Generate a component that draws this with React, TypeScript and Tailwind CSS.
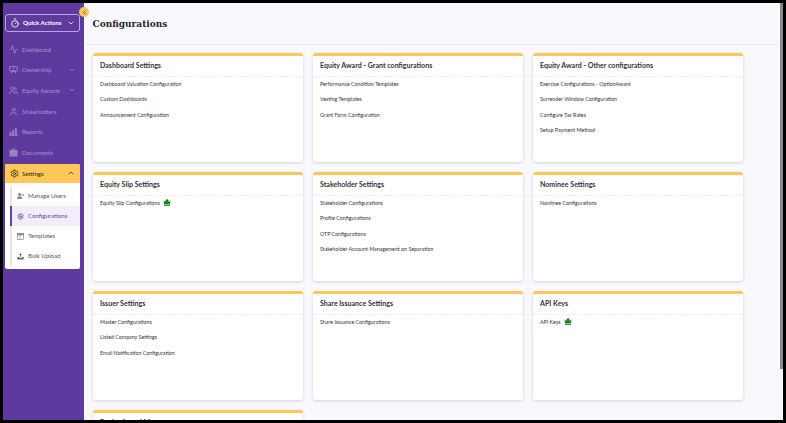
import { Activity, ChevronDown, ChevronLeft, ChevronUp, Settings, Timer, Users, User } from "lucide-react";

function Crown() {
  return (
    <svg width="8" height="7" viewBox="0 0 9 8" className="ml-[3px] mb-[2px]">
      <path d="M0.5 1.5 L2.4 3.4 L3 1 L4.5 0 L6 1 L6.6 3.4 L8.5 1.5 L8 5.6 L1 5.6 Z" fill="#16861f" />
      <rect x="1" y="6.3" width="7" height="1.5" fill="#16861f" />
    </svg>
  );
}

function OwnershipIcon() {
  return (
    <svg width="9" height="8" viewBox="0 0 10 9" fill="none" stroke="currentColor" strokeWidth="1">
      <rect x="0.7" y="0.7" width="8.6" height="5" rx="1" />
      <path d="M3 8.3V5.5h4v2.8M5 2v1.6" />
    </svg>
  );
}

function ReportsIcon() {
  return (
    <svg width="9" height="9" viewBox="0 0 9 9" fill="currentColor" opacity="0.85">
      <rect x="0.5" y="5" width="1.8" height="3" />
      <rect x="3.2" y="3" width="1.8" height="5" />
      <rect x="6" y="1" width="1.8" height="7" />
      <rect x="0" y="8" width="9" height="0.8" />
    </svg>
  );
}

function DocsIcon() {
  return (
    <svg width="9" height="9" viewBox="0 0 9 9" fill="currentColor" opacity="0.85">
      <path d="M3 0.5h3V2h2.5v6.5h-8V2H3z M3.8 1.2V2h1.4v-.8z" fillRule="evenodd" />
    </svg>
  );
}

function UsersSmall() {
  return (
    <svg width="7" height="6" viewBox="0 0 7 6" fill="#77777f">
      <circle cx="2.6" cy="1.4" r="1.3" />
      <path d="M0 5.8c0-1.6 1-2.5 2.6-2.5s2.6.9 2.6 2.5z" />
      <rect x="4.6" y="1" width="2.2" height=".7" />
      <rect x="5.2" y="2.3" width="1.6" height=".7" />
    </svg>
  );
}

function TableIcon() {
  return (
    <svg width="7" height="7" viewBox="0 0 7 7" fill="none" stroke="#8c8c92" strokeWidth=".7">
      <rect x=".4" y=".4" width="6.2" height="6.2" />
      <rect x=".4" y=".4" width="6.2" height="1.6" fill="#8c8c92" />
      <path d="M3 2v4.6" />
    </svg>
  );
}

function UploadIcon() {
  return (
    <svg width="7" height="7" viewBox="0 0 7 7" fill="#66666e">
      <path d="M3.5 0 5 1.8H4v2H3v-2H2z" />
      <path d="M0.3 4h1.6v.8h3.2V4h1.6v2.6H0.3z" />
    </svg>
  );
}

const cards: { t: string; items: string[]; crown?: boolean }[] = [
  { t: "Dashboard Settings", items: ["Dashboard Valuation Configuration", "Custom Dashboards", "Announcement Configuration"] },
  { t: "Equity Award - Grant configurations", items: ["Performance Condition Templates", "Vesting Templates", "Grant Form Configuration"] },
  { t: "Equity Award - Other configurations", items: ["Exercise Configurations - OptionAward", "Surrender Window Configuration", "Configure Tax Rates", "Setup Payment Method"] },
  { t: "Equity Slip Settings", items: ["Equity Slip Configurations"], crown: true },
  { t: "Stakeholder Settings", items: ["Stakeholder Configurations", "Profile Configurations", "OTP Configurations", "Stakeholder Account Management on Separation"] },
  { t: "Nominee Settings", items: ["Nominee Configurations"] },
  { t: "Issuer Settings", items: ["Master Configurations", "Listed Company Settings", "Email Notification Configuration"] },
  { t: "Share Issuance Settings", items: ["Share Issuance Configurations"] },
  { t: "API Keys", items: ["API Keys"], crown: true },
  { t: "Equity Award Management", items: [] },
];

function Card({ t, items, crown }: { t: string; items: string[]; crown?: boolean }) {
  return (
    <div className="h-[109px] bg-white rounded-[3px] border-t-[3px] border-[#fdc858] shadow-[0_1px_3px_rgba(40,40,70,0.18)]">
      <div className="h-[21px] pl-[7px] pt-[4px] text-[7.05px] leading-[12px] font-bold text-[#33333d] border-b border-dashed border-[#ececf0]">{t}</div>
      <div className="pl-[7px] flex flex-col">
        {items.map((i) => (
          <div key={i} className="h-[15.4px] flex items-center text-[5.3px] text-[#33333a]">
            {i}
            {crown && <Crown />}
          </div>
        ))}
      </div>
    </div>
  );
}

function NavItem({ icon, label, chev }: { icon: React.ReactNode; label: string; chev?: boolean }) {
  return (
    <div className="h-[20.6px] flex items-center pl-[6px] pr-[8px] text-[6.1px] text-[#a591cc]">
      <span className="w-[13px] flex items-center">{icon}</span>
      <span className="flex-1">{label}</span>
      {chev && <ChevronDown size={8} strokeWidth={2} />}
    </div>
  );
}

function SubItem({ icon, label, active }: { icon: React.ReactNode; label: string; active?: boolean }) {
  return (
    <div className={`h-[20px] flex items-center pl-[5px] text-[6.1px] border-l-2 ${active ? "border-[#6a3fa8] bg-[#f1eef9] text-[#6a3fa8]" : "border-[#e4e4e8] text-[#55555c]"}`}>
      <span className="w-[11px] flex items-center">{icon}</span>
      <span>{label}</span>
    </div>
  );
}

export default function App() {
  return (
    <div className="w-[786px] h-[423px] bg-black p-[3px] flex overflow-hidden font-['Lato',sans-serif]">
      <aside className="relative z-10 w-[81px] shrink-0 bg-[#5f3a9e] flex flex-col">
        <div className="mt-[11px] ml-[2px] mr-[4px] h-[18px] border border-[#b9a6dc] rounded-[3px] flex items-center pl-[4px] pr-[4px] text-white text-[6.2px] font-bold">
          <Timer size={10} strokeWidth={2} className="mr-[3px] shrink-0" />
          <span className="flex-1 whitespace-nowrap">Quick Actions</span>
          <ChevronDown size={8} strokeWidth={2.4} />
        </div>
        <div className="absolute right-[-5px] top-[4px] w-[10px] h-[10px] rounded-full bg-[#fdc858] flex items-center justify-center text-[#5f3a9e]">
          <ChevronLeft size={7} strokeWidth={3} />
        </div>
        <div className="mt-[7px] flex flex-col">
          <NavItem icon={<Activity size={9} />} label="Dashboard" />
          <NavItem icon={<OwnershipIcon />} label="Ownership" chev />
          <NavItem icon={<Users size={9} />} label="Equity Awards" chev />
          <NavItem icon={<User size={9} />} label="Stakeholders" />
          <NavItem icon={<ReportsIcon />} label="Reports" />
          <NavItem icon={<DocsIcon />} label="Documents" />
        </div>
        <div className="mt-[1px] ml-[2px] mr-[4px] rounded-[2px] overflow-hidden bg-white">
          <div className="h-[19.5px] bg-[#fdc858] flex items-center pl-[5px] pr-[5px] text-[6.2px] font-medium text-[#3a3320]">
            <Settings size={9} strokeWidth={2.4} className="mr-[3px] shrink-0" />
            <span className="flex-1">Settings</span>
            <ChevronUp size={8} strokeWidth={2.4} />
          </div>
          <div className="pl-[5px] pb-[3px] pt-[3px] flex flex-col">
            <SubItem icon={<UsersSmall />} label="Manage Users" />
            <SubItem icon={<Settings size={7} strokeWidth={2.6} />} label="Configurations" active />
            <SubItem icon={<TableIcon />} label="Templates" />
            <SubItem icon={<UploadIcon />} label="Bulk Upload" />
          </div>
        </div>
      </aside>
      <main className="relative flex-1 bg-[#f9f8fd] flex flex-col overflow-hidden">
        <div className="h-[42px] shrink-0 border-b border-[#ebebf0] pl-[8.5px] pt-[13px] text-[10px] leading-[16px] font-bold text-[#26262e] font-['DejaVu_Serif_Condensed','DejaVu_Serif',serif]">Configurations</div>
        <div className="pl-[9px] pt-[8px] grid grid-cols-[210px_210px_210px] gap-[10px]">
          {cards.map((c) => (
            <Card key={c.t} {...c} />
          ))}
        </div>
        <div className="absolute right-0 top-0 w-[3px] h-[366px] bg-[#8a8a8e]" />
      </main>
    </div>
  );
}
